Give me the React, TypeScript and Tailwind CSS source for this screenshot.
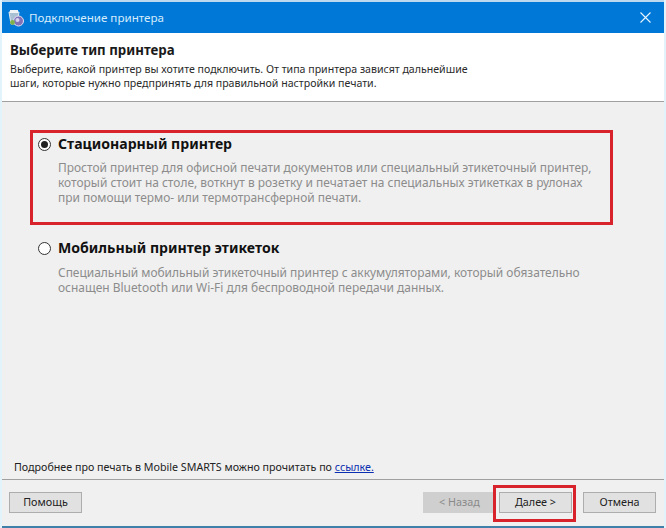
import React from "react";

const font = { fontFamily: '"Noto Sans", sans-serif' };

function Radio({ checked }: { checked?: boolean }) {
  return (
    <span className="flex h-[13px] w-[13px] shrink-0 items-center justify-center rounded-full border border-[#333] bg-white">
      {checked && <span className="h-[7px] w-[7px] rounded-full bg-[#222]" />}
    </span>
  );
}

function Btn({ children, disabled, className = "" }: { children: React.ReactNode; disabled?: boolean; className?: string }) {
  return (
    <div
      className={`flex h-[21px] w-[73px] items-center justify-center border text-[10.8px] ${
        disabled ? "border-[#cfcfcf] bg-[#cfcfcf] text-[#8a8a8a]" : "border-[#adadad] bg-[#e1e1e1] text-[#222]"
      } ${className}`}
    >
      {children}
    </div>
  );
}

export default function App() {
  return (
    <div className="relative flex h-[528px] w-[666px] flex-col overflow-hidden border-x-2 border-[#e2f3fc] bg-[#f0f0f0]" style={font}>
      <div className="h-[2px] bg-[#bcd9ef]" />
      <div className="flex h-[31px] items-center justify-between bg-[#0078d7] pl-[6px] pr-[13px]">
        <div className="flex items-center gap-[5px]">
          <svg width="16" height="18" viewBox="0 0 16 18">
            <path d="M1 3h10l-1.5 12H3z" fill="#a9c0d2" stroke="#e3ebf1" strokeWidth="1" />
            <rect x="2" y="1" width="8" height="3" fill="#f0f3f6" />
            <circle cx="10.5" cy="12" r="5" fill="#8273b8" stroke="#e4e0f2" />
            <circle cx="9.5" cy="11" r="2" fill="#d8d3ec" />
            <circle cx="4.5" cy="13.5" r="2.4" fill="#7fb24a" />
          </svg>
          <span className="text-[11.6px] leading-none text-[#d5ecfb]">Подключение принтера</span>
        </div>
        <svg width="11" height="11" viewBox="0 0 11 11" stroke="#eaf5fc" strokeWidth="1.1" fill="none">
          <path d="M0.5 0.5l10 10M10.5 0.5l-10 10" />
        </svg>
      </div>

      <div className="h-[69px] border-b border-[#a0a0a0] bg-white pl-[8px] pt-[9px]">
        <div className="text-[13.3px] font-bold leading-[16px] text-[#1a1a1a]">Выберите тип принтера</div>
        <div className="mt-[4px] text-[10.6px] leading-[14px] text-[#2a2a2a]">
          Выберите, какой принтер вы хотите подключить. От типа принтера зависят дальнейшие
          <br />
          шаги, которые нужно предпринять для правильной настройки печати.
        </div>
      </div>

      <div className="flex flex-1 flex-col pl-[36px] pt-[33px]">
        <div className="flex items-center gap-[7px]">
          <Radio checked />
          <span className="text-[14.1px] font-bold leading-[18px] text-[#111]">Стационарный принтер</span>
        </div>
        <div className="mt-[7px] pl-[20px] text-[11.95px] leading-[15px] text-[#8c8c8c]">
          Простой принтер для офисной печати документов или специальный этикеточный принтер,
          <br />
          который стоит на столе, воткнут в розетку и печатает на специальных этикетках в рулонах
          <br />
          при помощи термо- или термотрансферной печати.
        </div>
        <div className="mt-[34px] flex items-center gap-[7px]">
          <Radio />
          <span className="text-[14.1px] font-bold leading-[18px] text-[#111]">Мобильный принтер этикеток</span>
        </div>
        <div className="mt-[8px] pl-[20px] text-[11.95px] leading-[15px] text-[#8c8c8c]">
          Специальный мобильный этикеточный принтер с аккумуляторами, который обязательно
          <br />
          оснащен Bluetooth или Wi-Fi для беспроводной передачи данных.
        </div>
        <div className="mt-auto mb-[5px] -ml-[24px] text-[10.7px] leading-[14px] text-[#222]">
          Подробнее про печать в Mobile SMARTS можно прочитать по{" "}
          <span className="text-[#0b2fb0] underline">ссылке.</span>
        </div>
      </div>

      <div className="flex h-[47px] items-start border-t border-[#a0a0a0] pl-[7px] pr-[8px] pt-[12px]">
        <Btn>Помощь</Btn>
        <div className="ml-auto flex">
          <Btn disabled>&lt; Назад</Btn>
          <Btn className="ml-[3px]">Далее &gt;</Btn>
          <Btn className="ml-[11px]">Отмена</Btn>
        </div>
      </div>
      <div className="h-[2px] bg-[#3f7fa8]" />

      <div className="absolute left-[28px] top-[130px] h-[95px] w-[583px] border-[3px] border-[#d8232d]" />
      <div className="absolute left-[491px] top-[485px] h-[37px] w-[83px] border-[3px] border-[#d8232d]" />
    </div>
  );
}
